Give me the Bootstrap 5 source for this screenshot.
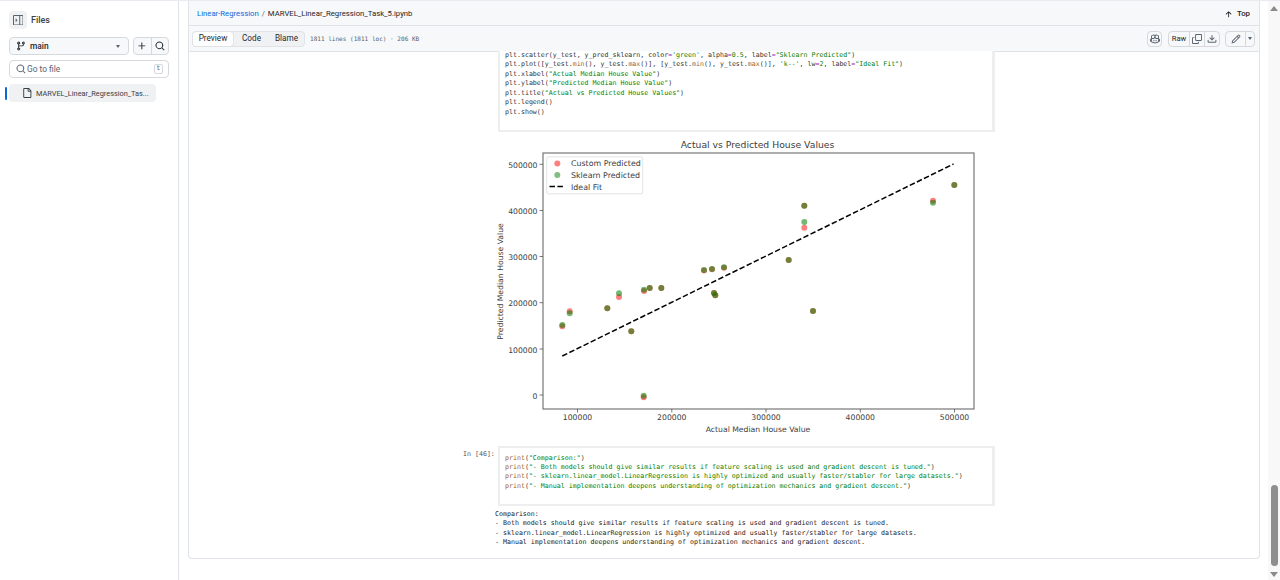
<!doctype html>
<html lang="en"><head><meta charset="utf-8"><title>MARVEL_Linear_Regression_Task_5.ipynb</title>
<link href="https://cdn.jsdelivr.net/npm/bootstrap@5.3.0/dist/css/bootstrap.min.css" rel="stylesheet">
<style>
html,body{height:580px;overflow:hidden}
body{font-family:Roboto,"Noto Sans",sans-serif;font-size:8.2px;color:#1f2328;background:#fff;line-height:1.3}
svg.oct{fill:currentColor;display:block;flex:none}
.top-line{height:1px;background:#e8ebef;flex:none}
.side{width:179px;flex:none;border-right:1px solid #dfe3e8;padding:10px 9px 0 9px;position:relative}
.pane-btn{width:18px;height:18px;background:#eff1f3;border-radius:4px;color:#59636e}
.files-t{font-weight:500;font-size:9px;color:#3a4047;padding-top:1px}
.gh-btn{height:18px;background:#f6f8fa;border:1px solid #d5d9de;border-radius:4px;color:#25292e;font-size:8.4px}
.branch{width:120px;padding:0 6px}
.caret-d{width:0;height:0;border-left:2.5px solid transparent;border-right:2.5px solid transparent;border-top:3px solid #59636e}
.caret-far{margin-right:2px}
.duo{width:36px}
.duo>div{flex:1}
.duo>div+div{border-left:1px solid #d5d9de}
.goto{height:18px;border:1px solid #d5d9de;border-radius:4px;padding:0 5px 0 6px;color:#59636e;margin-top:5px;font-size:8.4px;gap:1px}
.kbd-t{font-size:6.4px;border:1px solid #d5d9de;border-radius:2px;width:9px;height:10px;line-height:8px;text-align:center;font-family:"Liberation Mono",monospace}
.tree-row{width:147px;height:18px;background:#eff1f3;border-radius:4px;margin-top:6px;padding-left:13px;color:#3a4047;font-size:7.35px;gap:4px}
.tree-row span{padding-top:1px}
.mark-b{position:absolute;left:5px;top:86px;width:2px;height:13px;background:#0969da;border-radius:1px}
.center{flex:1;min-width:0;padding:0 8px 21px 9px;display:flex;flex-direction:column}
.shell{flex:1;border:1px solid #dfe3e8;border-top:0;border-radius:0 0 4px 4px;overflow:hidden;min-height:0}
.bar1{height:25px;background:#f6f8fa;border-bottom:1px solid #dfe3e8;padding:2px 9px 0 8px;font-size:7.72px}
.bar1 a{color:#0969da;text-decoration:none}
.sl{margin:0 3px;color:#59636e}
.top-l{gap:4px;font-weight:500;font-size:7.8px}
.bar2{height:26px;background:#f6f8fa;border-bottom:1px solid #dfe3e8;padding:0 4px 0 3px}
.seg{height:16px;width:113px;background:#eff1f3;border:1px solid #dfe3e8;border-radius:4px;color:#25292e}
.seg .on{width:42px;height:16px;background:#fff;border:1px solid #dfe3e8;border-radius:4px;margin-left:-1px}
.seg .off{flex:1}
.meta{font-family:"DejaVu Sans Mono",monospace;font-size:6.05px;color:#59636e;margin-left:5px}
.tools{gap:5px}
.tool{height:16px;background:#f6f8fa;border:1px solid #d5d9de;border-radius:4px;color:#59636e}
.tool>div{height:100%}
.tool>div+div{border-left:1px solid #d5d9de}
.t-bot{width:15px;margin-right:1px}
.t-raw{width:20px;color:#25292e;font-size:7.6px}
.t-ico{width:15px}
.t-pen{width:19px}
.t-car{width:9px}
.nb{padding-left:309px}
.cell{width:497px;border:2px solid #eeeeee;border-top:0;border-right-width:3px;background:#fff;font-family:"DejaVu Sans Mono","Liberation Mono",monospace;font-size:6.62px;line-height:9.47px;color:#333}
.ln{white-space:pre;display:block}
.cell-a{height:81px;padding-left:5px}
.first-ln{margin-top:-1px}
.cell-b{height:60px;border-top:2px solid #eeeeee;padding:5.5px 0 0 5px}
.row-in{margin-left:-35px}
.pr{width:35px;flex:none;font-family:"DejaVu Sans Mono",monospace;font-size:6.62px;line-height:9.5px;color:#555;padding-top:4px}
.out{font-family:"DejaVu Sans Mono",monospace;font-size:6.62px;line-height:9.47px;color:#222;margin-left:-3px;padding-top:4px}
.s{color:#008000}.b{color:#a0622a}.o{color:#a020c0}
.chart{display:block;width:497px;height:314px;overflow:visible}
.chart text{font-family:"DejaVu Sans",sans-serif;fill:#3c3c3c}
.rail{width:12px;flex:none;background:#f8f8f8}
.tri-u{width:0;height:0;border-left:4px solid transparent;border-right:4px solid transparent;border-bottom:5px solid #8a8a8a;margin:5px auto 0}
.thumb{width:7px;height:81px;background:#8e8e8e;border-radius:4px;margin:0 auto}
.tri-d{width:0;height:0;border-left:4px solid transparent;border-right:4px solid transparent;border-top:5px solid #8a8a8a;margin:6px auto 3px}
</style></head>
<body class="d-flex flex-column">
<svg width="0" height="0" class="position-absolute"><defs>
<symbol id="i-pane" viewBox="0 0 16 16"><path d="M6.823 7.823a.25.25 0 0 1 0 .354l-2.396 2.396A.25.25 0 0 1 4 10.396V5.604a.25.25 0 0 1 .427-.177Z M1.75 0h12.5C15.216 0 16 .784 16 1.75v12.5A1.75 1.75 0 0 1 14.25 16H1.75A1.75 1.75 0 0 1 0 14.25V1.75C0 .784.784 0 1.75 0ZM1.5 1.75v12.5c0 .138.112.25.25.25H9.5v-13H1.75a.25.25 0 0 0-.25.25ZM11 14.5h3.25a.25.25 0 0 0 .25-.25V1.75a.25.25 0 0 0-.25-.25H11Z"/></symbol>
<symbol id="i-branch" viewBox="0 0 16 16"><path d="M9.5 3.25a2.25 2.25 0 1 1 3 2.122V6A2.5 2.5 0 0 1 10 8.5H6a1 1 0 0 0-1 1v1.128a2.251 2.251 0 1 1-1.5 0V5.372a2.25 2.25 0 1 1 1.5 0v1.836A2.493 2.493 0 0 1 6 7h4a1 1 0 0 0 1-1v-.628A2.25 2.25 0 0 1 9.5 3.25Zm-6 0a.75.75 0 1 0 1.5 0 .75.75 0 0 0-1.5 0Zm8.25-.75a.75.75 0 1 0 0 1.5.75.75 0 0 0 0-1.5ZM4.25 12a.75.75 0 1 0 0 1.5.75.75 0 0 0 0-1.5Z"/></symbol>
<symbol id="i-search" viewBox="0 0 16 16"><path d="M10.68 11.74a6 6 0 0 1-7.922-8.982 6 6 0 0 1 8.982 7.922l3.04 3.04a.749.749 0 0 1-.326 1.275.749.749 0 0 1-.734-.215ZM11.5 7a4.499 4.499 0 1 0-8.997 0A4.499 4.499 0 0 0 11.5 7Z"/></symbol>
<symbol id="i-plus" viewBox="0 0 16 16"><path d="M7.75 2a.75.75 0 0 1 .75.75V7h4.25a.75.75 0 0 1 0 1.5H8.5v4.25a.75.75 0 0 1-1.5 0V8.5H2.75a.75.75 0 0 1 0-1.5H7V2.75A.75.75 0 0 1 7.75 2Z"/></symbol>
<symbol id="i-file" viewBox="0 0 16 16"><path d="M2 1.75C2 .784 2.784 0 3.75 0h6.586c.464 0 .909.184 1.237.513l2.914 2.914c.329.328.513.773.513 1.237v9.586A1.75 1.75 0 0 1 13.25 16h-9.5A1.75 1.75 0 0 1 2 14.25Zm1.75-.25a.25.25 0 0 0-.25.25v12.5c0 .138.112.25.25.25h9.5a.25.25 0 0 0 .25-.25V6h-2.75A1.75 1.75 0 0 1 9 4.25V1.5Zm6.75.062V4.25c0 .138.112.25.25.25h2.688l-.011-.013-2.914-2.914-.013-.011Z"/></symbol>
<symbol id="i-up" viewBox="0 0 16 16"><path d="M3.47 7.78a.75.75 0 0 1 0-1.06l4.25-4.25a.75.75 0 0 1 1.06 0l4.25 4.25a.751.751 0 0 1-.018 1.042.751.751 0 0 1-1.042.018L9 4.81v7.44a.75.75 0 0 1-1.5 0V4.81L4.53 7.78a.75.75 0 0 1-1.06 0Z"/></symbol>
<symbol id="i-copy" viewBox="0 0 16 16"><path d="M0 6.75C0 5.784.784 5 1.75 5h1.5a.75.75 0 0 1 0 1.5h-1.5a.25.25 0 0 0-.25.25v7.5c0 .138.112.25.25.25h7.5a.25.25 0 0 0 .25-.25v-1.5a.75.75 0 0 1 1.5 0v1.5A1.75 1.75 0 0 1 9.25 16h-7.5A1.75 1.75 0 0 1 0 14.25Z M5 1.75C5 .784 5.784 0 6.75 0h7.5C15.216 0 16 .784 16 1.75v7.5A1.75 1.75 0 0 1 14.25 11h-7.5A1.75 1.75 0 0 1 5 9.25Zm1.75-.25a.25.25 0 0 0-.25.25v7.5c0 .138.112.25.25.25h7.5a.25.25 0 0 0 .25-.25v-7.5a.25.25 0 0 0-.25-.25Z"/></symbol>
<symbol id="i-dl" viewBox="0 0 16 16"><path d="M2.75 14A1.75 1.75 0 0 1 1 12.25v-2.5a.75.75 0 0 1 1.5 0v2.5c0 .138.112.25.25.25h10.5a.25.25 0 0 0 .25-.25v-2.5a.75.75 0 0 1 1.5 0v2.5A1.75 1.75 0 0 1 13.25 14Z M7.25 7.689V2a.75.75 0 0 1 1.5 0v5.689l1.97-1.969a.749.749 0 1 1 1.06 1.06l-3.25 3.25a.749.749 0 0 1-1.06 0L4.22 6.78a.749.749 0 1 1 1.06-1.06l1.97 1.969Z"/></symbol>
<symbol id="i-pen" viewBox="0 0 16 16"><path d="M11.013 1.427a1.75 1.75 0 0 1 2.474 0l1.086 1.086a1.75 1.75 0 0 1 0 2.474l-8.61 8.61c-.21.21-.47.364-.756.445l-3.251.93a.75.75 0 0 1-.927-.928l.929-3.25c.081-.286.235-.547.445-.758l8.61-8.61Zm.176 4.823L9.75 4.81l-6.286 6.287a.253.253 0 0 0-.064.108l-.558 1.953 1.953-.558a.253.253 0 0 0 .108-.064Zm1.238-3.763a.25.25 0 0 0-.354 0L10.811 3.75l1.439 1.44 1.263-1.263a.25.25 0 0 0 0-.354Z"/></symbol>
<symbol id="i-bot" viewBox="0 0 16 16"><path d="M7.998 15.035c-4.562 0-7.873-2.914-7.998-3.749V9.338c.085-.628.677-1.686 1.588-2.065.013-.07.024-.143.036-.218.029-.183.06-.384.126-.612-.201-.508-.254-1.084-.254-1.656 0-.87.128-1.769.693-2.484.579-.733 1.494-1.124 2.724-1.261 1.206-.134 2.262.034 2.944.765.05.053.096.108.139.165.044-.057.094-.112.143-.165.682-.731 1.738-.899 2.944-.765 1.23.137 2.145.528 2.724 1.261.566.715.693 1.614.693 2.484 0 .572-.053 1.148-.254 1.656.066.228.098.429.126.612.012.076.024.148.037.218.924.385 1.522 1.471 1.591 2.095v1.872c0 .766-3.351 3.795-8.002 3.795Zm0-1.485c2.28 0 4.584-1.11 5.002-1.433V7.862l-.023-.116c-.49.21-1.075.291-1.727.291-1.146 0-2.059-.327-2.71-.991A3.222 3.222 0 0 1 8 6.303a3.24 3.24 0 0 1-.544.743c-.65.664-1.563.991-2.71.991-.652 0-1.236-.081-1.727-.291l-.023.116v4.255c.419.323 2.722 1.433 5.002 1.433ZM6.762 2.83c-.193-.206-.637-.413-1.682-.297-1.019.113-1.479.404-1.713.7-.247.312-.369.789-.369 1.554 0 .793.129 1.171.308 1.371.162.181.519.379 1.442.379.853 0 1.339-.235 1.638-.54.315-.322.527-.827.617-1.553.117-.935-.037-1.395-.241-1.614Zm4.155-.297c-1.044-.116-1.488.091-1.681.297-.204.219-.359.679-.242 1.614.091.726.303 1.231.618 1.553.299.305.784.54 1.638.54.922 0 1.28-.198 1.442-.379.179-.2.308-.578.308-1.371 0-.765-.123-1.242-.37-1.554-.233-.296-.693-.587-1.713-.7Z M6.250 9.037a.75.75 0 0 1 .75.75v1.501a.75.75 0 0 1-1.5 0V9.787a.75.75 0 0 1 .75-.75Zm4.250.75v1.501a.75.75 0 0 1-1.5 0V9.787a.75.75 0 0 1 1.5 0Z"/></symbol>
</defs></svg>
<div class="top-line"></div>
<div class="d-flex flex-grow-1" style="min-height:0">
  <aside class="side">
    <div class="d-flex align-items-center gap-1">
      <div class="pane-btn d-flex align-items-center justify-content-center"><svg class="oct" width="10.500" height="10.500"><use href="#i-pane"/></svg></div>
      <span class="files-t">Files</span>
    </div>
    <div class="d-flex justify-content-between mt-2">
      <div class="gh-btn branch d-flex align-items-center"><svg class="oct me-1" width="10" height="10"><use href="#i-branch"/></svg><span class="fw-medium">main</span><span class="caret-d caret-far ms-auto"></span></div>
      <div class="gh-btn duo d-flex align-items-stretch">
        <div class="d-flex align-items-center justify-content-center"><svg class="oct" width="10" height="10"><use href="#i-plus"/></svg></div>
        <div class="d-flex align-items-center justify-content-center"><svg class="oct" width="10" height="10"><use href="#i-search"/></svg></div>
      </div>
    </div>
    <div class="goto d-flex align-items-center"><svg class="oct" width="10" height="10"><use href="#i-search"/></svg><span>Go to file</span><span class="kbd-t ms-auto">t</span></div>
    <div class="tree-row d-flex align-items-center"><svg class="oct" width="10" height="10"><use href="#i-file"/></svg><span>MARVEL_Linear_Regression_Tas...</span></div>
    <div class="mark-b"></div>
  </aside>
  <main class="center">
    <div class="shell">
      <div class="bar1 d-flex align-items-center">
        <a href="#">Linear-Regression</a><span class="sl">/</span><span>MARVEL_Linear_Regression_Task_5.ipynb</span>
        <span class="top-l ms-auto d-flex align-items-center"><svg class="oct" width="9" height="9"><use href="#i-up"/></svg>Top</span>
      </div>
      <div class="bar2 d-flex align-items-center">
        <div class="seg d-flex align-items-center text-center"><div class="on d-flex align-items-center justify-content-center">Preview</div><div class="off">Code</div><div class="off">Blame</div></div>
        <span class="meta">1811 lines (1811 loc) · 206 KB</span>
        <div class="tools ms-auto d-flex align-items-center">
          <div class="tool t-bot d-flex align-items-center justify-content-center"><svg class="oct" width="10" height="10"><use href="#i-bot"/></svg></div>
          <div class="tool d-flex align-items-stretch">
            <div class="t-raw d-flex align-items-center justify-content-center">Raw</div>
            <div class="t-ico d-flex align-items-center justify-content-center"><svg class="oct" width="10" height="10"><use href="#i-copy"/></svg></div>
            <div class="t-ico d-flex align-items-center justify-content-center"><svg class="oct" width="10" height="10"><use href="#i-dl"/></svg></div>
          </div>
          <div class="tool d-flex align-items-stretch">
            <div class="t-pen d-flex align-items-center justify-content-center"><svg class="oct" width="10" height="10"><use href="#i-pen"/></svg></div>
            <div class="t-car d-flex align-items-center justify-content-center"><span class="caret-d"></span></div>
          </div>
        </div>
      </div>
      <div class="nb">
<div class="cell cell-a">
<div class="ln first-ln">plt.scatter(y_test, y_pred_sklearn, color<span class="o">=</span><span class="s">'green'</span>, alpha<span class="o">=</span><span class="s">0.5</span>, label<span class="o">=</span><span class="s">"Sklearn Predicted"</span>)</div>
<div class="ln">plt.plot([y_test.<span class="b">min</span>(), y_test.<span class="b">max</span>()], [y_test.<span class="b">min</span>(), y_test.<span class="b">max</span>()], <span class="s">'k--'</span>, lw<span class="o">=</span><span class="s">2</span>, label<span class="o">=</span><span class="s">"Ideal Fit"</span>)</div>
<div class="ln">plt.xlabel(<span class="s">"Actual Median House Value"</span>)</div>
<div class="ln">plt.ylabel(<span class="s">"Predicted Median House Value"</span>)</div>
<div class="ln">plt.title(<span class="s">"Actual vs Predicted House Values"</span>)</div>
<div class="ln">plt.legend()</div>
<div class="ln">plt.show()</div>
</div>
<svg class="chart" viewBox="498 133 497 314" aria-label="Actual vs Predicted House Values">
  <text x="757.500" y="149" font-size="9.250" text-anchor="middle">Actual vs Predicted House Values</text>
  <g fill="#ff0000" fill-opacity=".5">
    <circle cx="562.300" cy="327.300" r="3"/><circle cx="569.700" cy="312.300" r="3"/><circle cx="607.300" cy="309.300" r="3"/><circle cx="619" cy="298" r="3"/><circle cx="631.300" cy="332.300" r="3"/><circle cx="644" cy="292" r="3"/><circle cx="649.700" cy="289" r="3"/><circle cx="661.300" cy="289" r="3"/><circle cx="643.700" cy="398.300" r="3"/><circle cx="704" cy="271.500" r="3"/><circle cx="712" cy="270.200" r="3"/><circle cx="724" cy="268.700" r="3"/><circle cx="714" cy="294" r="3"/><circle cx="715.300" cy="296.300" r="3"/><circle cx="788.700" cy="261" r="3"/><circle cx="804.300" cy="206.700" r="3"/><circle cx="804.300" cy="228.700" r="3"/><circle cx="813" cy="312" r="3"/><circle cx="933" cy="201.700" r="3"/><circle cx="954.300" cy="186" r="3"/>
  </g>
  <g fill="#008000" fill-opacity=".55">
    <circle cx="562.300" cy="326" r="3"/><circle cx="569.700" cy="314.300" r="3"/><circle cx="607.300" cy="309.300" r="3"/><circle cx="619" cy="294.300" r="3"/><circle cx="631.300" cy="332.300" r="3"/><circle cx="644" cy="290.700" r="3"/><circle cx="649.700" cy="289" r="3"/><circle cx="661.300" cy="289" r="3"/><circle cx="643.700" cy="396.700" r="3"/><circle cx="704" cy="271" r="3"/><circle cx="712" cy="270" r="3"/><circle cx="724" cy="268.300" r="3"/><circle cx="714" cy="294" r="3"/><circle cx="715.300" cy="296.300" r="3"/><circle cx="788.700" cy="261" r="3"/><circle cx="804.300" cy="206.700" r="3"/><circle cx="804.300" cy="223" r="3"/><circle cx="813" cy="312" r="3"/><circle cx="933" cy="203.700" r="3"/><circle cx="954.300" cy="186" r="3"/>
  </g>
  <line x1="562.300" y1="357" x2="953.500" y2="165" stroke="#000" stroke-width="1.500" stroke-dasharray="5.500 2.400"/>
  <rect x="543" y="154" width="431" height="256" fill="none" stroke="#777" stroke-width="1.200"/>
  <g stroke="#444" stroke-width=".7">
    <path d="M577.500 410v3.500M671.800 410v3.500M766 410v3.500M860.300 410v3.500M954.500 410v3.500M543 396h-3.500M543 350h-3.500M543 303.700h-3.500M543 257.500h-3.500M543 211.500h-3.500M543 165.300h-3.500"/>
  </g>
  <g font-size="7.700" text-anchor="middle">
    <text x="577.500" y="421">100000</text><text x="671.800" y="421">200000</text><text x="766" y="421">300000</text><text x="860.300" y="421">400000</text><text x="954.500" y="421">500000</text>
  </g>
  <g font-size="7.700" text-anchor="end">
    <text x="537.500" y="399.500">0</text><text x="537.500" y="353.500">100000</text><text x="537.500" y="307.200">200000</text><text x="537.500" y="261">300000</text><text x="537.500" y="215">400000</text><text x="537.500" y="168.800">500000</text>
  </g>
  <text x="758" y="433" font-size="7.700" text-anchor="middle">Actual Median House Value</text>
  <text transform="translate(503 282.500) rotate(-90)" font-size="7.700" text-anchor="middle">Predicted Median House Value</text>
  <rect x="546.700" y="157.800" width="96" height="37" rx="2" fill="#fff" fill-opacity=".85" stroke="#dcdcdc" stroke-width=".8"/>
  <circle cx="557.300" cy="164.500" r="3" fill="#ff0000" fill-opacity=".5"/>
  <circle cx="557.300" cy="176" r="3" fill="#008000" fill-opacity=".5"/>
  <line x1="549.500" y1="187.500" x2="565" y2="187.500" stroke="#000" stroke-width="1.500" stroke-dasharray="5.500 2.400"/>
  <g font-size="7.900"><text x="571" y="167.200">Custom Predicted</text><text x="571" y="178.800">Sklearn Predicted</text><text x="571" y="190.500">Ideal Fit</text></g>
</svg>
<div class="d-flex row-in">
  <div class="pr">In [46]:</div>
  <div class="cell cell-b">
<div class="ln"><span class="b">print</span>(<span class="s">"Comparison:"</span>)</div>
<div class="ln"><span class="b">print</span>(<span class="s">"- Both models should give similar results if feature scaling is used and gradient descent is tuned."</span>)</div>
<div class="ln"><span class="b">print</span>(<span class="s">"- sklearn.linear_model.LinearRegression is highly optimized and usually faster/stabler for large datasets."</span>)</div>
<div class="ln"><span class="b">print</span>(<span class="s">"- Manual implementation deepens understanding of optimization mechanics and gradient descent."</span>)</div>
</div>
</div>
<div class="out">
<div class="ln">Comparison:</div>
<div class="ln">- Both models should give similar results if feature scaling is used and gradient descent is tuned.</div>
<div class="ln">- sklearn.linear_model.LinearRegression is highly optimized and usually faster/stabler for large datasets.</div>
<div class="ln">- Manual implementation deepens understanding of optimization mechanics and gradient descent.</div>
</div>
      </div>
    </div>
  </main>
  <div class="rail d-flex flex-column">
    <div class="tri-u"></div>
    <div class="flex-grow-1"></div>
    <div class="thumb"></div>
    <div class="tri-d"></div>
  </div>
</div>
</body></html>
